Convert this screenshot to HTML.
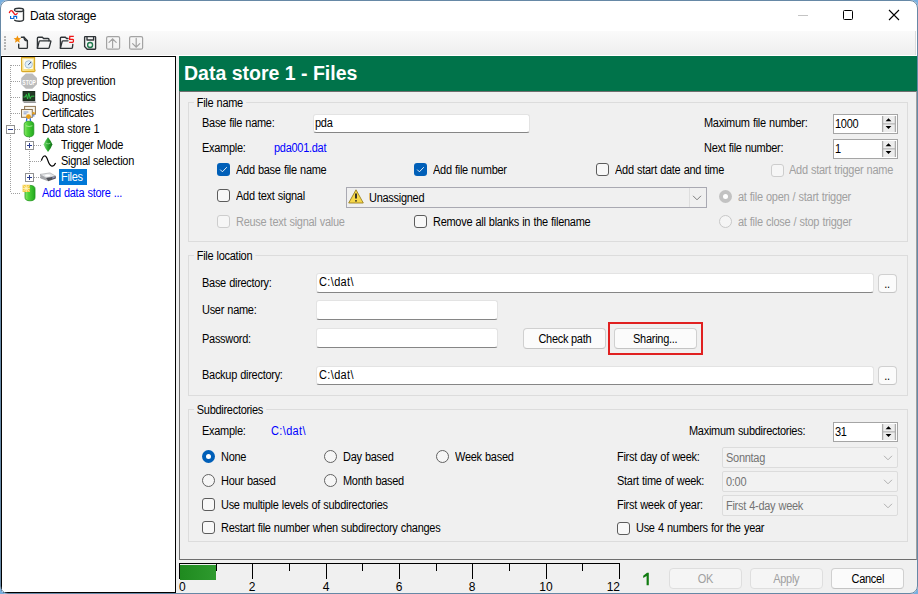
<!DOCTYPE html><html><head><meta charset="utf-8"><style>
*{margin:0;padding:0;box-sizing:border-box}
html,body{width:918px;height:594px;overflow:hidden;background:#77afe0;font-family:"Liberation Sans",sans-serif;}
.a{position:absolute}
.t{position:absolute;font-size:12px;line-height:14px;letter-spacing:-0.3px;word-spacing:0.5px;white-space:nowrap;color:#000;transform:scaleX(0.915);transform-origin:0 0;-webkit-text-stroke-width:0px}
#win{position:absolute;left:0px;top:0px;width:918px;height:594px;border-radius:8px;background:#f0f0f0;overflow:hidden}
#wb{position:absolute;left:0px;top:0px;width:918px;height:594px;border-radius:8px;border:1px solid #6688a6}
.cb{width:13px;height:13px;border:1px solid #5c5c5c;border-radius:3px;background:#f8f8f8}
.cbd{width:13px;height:13px;border:1px solid #cdcdcd;border-radius:3px;background:#f6f6f6}
.cbc{width:13px;height:13px;border-radius:3px;background:#005fb8}
.cbc svg{position:absolute;left:0;top:0}
.r{width:13px;height:13px;border:1px solid #626262;border-radius:50%;background:#f6f6f6}
.rd{width:13px;height:13px;border:1px solid #c8c8c8;border-radius:50%;background:#f5f5f5}
.rc{width:13px;height:13px;border-radius:50%;background:#005fb8}
.rc::after{content:"";position:absolute;left:4px;top:4px;width:5px;height:5px;border-radius:50%;background:#fff}
.tb{background:#fff;border:1px solid #e3e3e3;border-bottom:1px solid #868686;border-radius:3px}
.grp{border:1px solid #dcdcdc}
.sp{width:65px;height:20px;border:1px solid #a5a5a5;background:#fff;box-shadow:inset 1px 1px 0 #fff}
.spb{position:absolute;right:1px;top:1px;width:15px;height:16px;background:#e9e9e9;border:1px solid #b0b0b0}
.up{position:absolute;left:3px;top:2px;width:0;height:0;border-left:4px solid transparent;border-right:4px solid transparent;border-bottom:4px solid #000}
.dn{position:absolute;left:3px;top:9px;width:0;height:0;border-left:4px solid transparent;border-right:4px solid transparent;border-top:4px solid #000}
.btn{background:#fbfbfb;border:1px solid #d0d0d0;border-bottom-color:#c4c4c4;border-radius:4px;text-align:center;font-size:12px;letter-spacing:-0.3px;color:#000;white-space:nowrap;-webkit-text-stroke-width:0px}
.btn span{display:inline-block;transform:scaleX(0.915)}
.btn.dis{background:#f5f5f5;border-color:#dedede;color:#a0a0a0}
.cmb{background:#f0f0f0;border:1px solid #a9a9b2}
.cmb.dis{background:#f2f2f2;border:1px solid #dcdcdc;border-radius:2px}
</style></head><body><div id="win">
<div class="a" style="left:1px;top:1px;width:916px;height:29px;background:#fff;border-radius:7px 7px 0 0"></div>
<div class="a" style="left:1px;top:30px;width:916px;height:26px;background:#fff"></div>
<div class="a" style="left:1px;top:31px;width:915px;height:24px;background:linear-gradient(#fafafa,#eeeeee);border-right:1px solid #dcdcdc"></div>
<div class="a" style="left:30px;top:9px;font-size:12px;letter-spacing:-0.2px;line-height:15px;white-space:nowrap">Data storage</div>
<svg class="a" style="left:0px;top:0px" width="30" height="28" viewBox="0 0 30 28">
<ellipse cx="19" cy="9.9" rx="4.5" ry="1.6" stroke="#2f3437" stroke-width="1.4" fill="none"/>
<path d="M23.5 9.9 L23.5 19.6 Q23.5 21.3 19.2 21.3 Q15.4 21.3 14.6 20.2" stroke="#2f3437" stroke-width="1.4" fill="none" stroke-linecap="round"/>
<path d="M9.4 12.6 Q10.6 9.6 12.2 11 Q13.4 12.4 14.4 14 Q15.6 15.4 17.2 13.4" stroke="#f01c1c" stroke-width="1.3" fill="none" stroke-linecap="round"/>
<path d="M10.6 16.1 L10.6 18.5 L13.8 18.5 L13.8 16.3 L16.6 16.3 L16.6 18.7" stroke="#0a68d8" stroke-width="1.2" fill="none"/>
</svg>
<div class="a" style="left:798px;top:15px;width:10px;height:1px;background:#c4c4c4"></div>
<div class="a" style="left:843px;top:10px;width:10px;height:10px;border:1px solid #000;border-radius:1.5px"></div>
<svg class="a" style="left:888px;top:9px" width="12" height="12" viewBox="0 0 12 12"><path d="M1 1 L11 11 M11 1 L1 11" stroke="#000" stroke-width="1.1"/></svg>
<div class="a" style="left:4px;top:36px;width:2px;height:2px;background:#b4b4b4"></div>
<div class="a" style="left:4px;top:39px;width:2px;height:2px;background:#b4b4b4"></div>
<div class="a" style="left:4px;top:42px;width:2px;height:2px;background:#b4b4b4"></div>
<div class="a" style="left:4px;top:45px;width:2px;height:2px;background:#b4b4b4"></div>
<div class="a" style="left:4px;top:48px;width:2px;height:2px;background:#b4b4b4"></div>

<svg class="a" style="left:0px;top:30px" width="150" height="26" viewBox="0 30 150 26">
 <g fill="none" stroke="#2f3437" stroke-width="1.35" stroke-linejoin="round" stroke-linecap="round">
  <path d="M18.7 44.2 L18.7 47.4 Q18.7 48.4 19.7 48.4 L26.4 48.4 Q27.4 48.4 27.4 47.4 L27.4 40.8 L24 37.2 L21.4 37.2"/>
  <path d="M24 37.2 Q24 40.8 27.4 40.8"/>
  <path d="M37.4 48.2 L37.4 38.2 Q37.4 37.2 38.4 37.2 L42.4 37.2 L43.6 38.5 L48 38.5 Q49 38.5 49 39.5 L49 40.8"/>
  <path d="M37.4 48.2 L39.2 41.4 Q39.4 40.8 40.2 40.8 L50.2 40.8 Q51 40.8 50.8 41.6 L49.2 47.6 Q49 48.4 48.2 48.4 L37.6 48.4"/>
  <path d="M60.4 48.2 L60.4 38.2 Q60.4 37.2 61.4 37.2 L65.4 37.2 L66.6 38.5 L68 38.5"/>
  <path d="M60.4 48.2 L62.2 41.4 Q62.4 40.8 63.2 40.8 L68 40.8"/>
  <path d="M60.6 48.4 L71.4 48.4 Q72.2 48.4 72.4 47.6 L72.8 44.4"/>
  <path d="M85 36.6 L95 36.6 Q95.6 36.6 95.6 37.2 L95.6 48.6 Q95.6 49.2 95 49.2 L87.2 49.2 L84.6 46.6 L84.6 37.2 Q84.6 36.6 85.2 36.6 Z"/>
  <path d="M87 36.8 L87 40 L93.6 40 L93.6 36.8"/>
 </g>
 <path d="M17.4 35.6 L18.5 38.1 L21.2 38.3 L19.2 40.1 L19.8 42.7 L17.4 41.3 L15 42.7 L15.6 40.1 L13.6 38.3 L16.3 38.1 Z" fill="#f0940e"/>
 <path d="M73.8 36.4 L69.8 36.4 L69.6 39.3 L72.6 39.3 Q73.4 39.3 73.4 40.1 L73.4 41.6 Q73.4 42.4 72.6 42.4 L69.2 42.4" fill="none" stroke="#f01515" stroke-width="1.3"/>
 <circle cx="90.1" cy="45" r="2.5" fill="none" stroke="#1f7a4d" stroke-width="1.35"/>
 <g fill="none" stroke="#a3a3a3" stroke-width="1.2" stroke-linecap="round">
  <rect x="106.6" y="36.6" width="13" height="12.6" rx="1.5"/>
  <path d="M112.6 38.8 L112.6 47.6 M109 42.4 L112.6 38.8 L116.2 42.4"/>
  <rect x="129.6" y="36.6" width="13" height="12.6" rx="1.5"/>
  <path d="M136.2 38.4 L136.2 47.2 M132.6 43.6 L136.2 47.2 L139.8 43.6"/>
 </g>
</svg>

<div class="a" style="left:1px;top:56px;width:175px;height:537px;background:#fff;border:1px solid #000;border-right-width:1px"></div>
<div class="a" style="left:10px;top:65px;width:1px;height:128px;background:repeating-linear-gradient(180deg,#a0a0a0 0 1px,transparent 1px 2px)"></div>
<div class="a" style="left:11px;top:65px;width:10px;height:1px;background:repeating-linear-gradient(90deg,#a0a0a0 0 1px,transparent 1px 2px)"></div>
<div class="a" style="left:11px;top:81px;width:10px;height:1px;background:repeating-linear-gradient(90deg,#a0a0a0 0 1px,transparent 1px 2px)"></div>
<div class="a" style="left:11px;top:97px;width:10px;height:1px;background:repeating-linear-gradient(90deg,#a0a0a0 0 1px,transparent 1px 2px)"></div>
<div class="a" style="left:11px;top:113px;width:10px;height:1px;background:repeating-linear-gradient(90deg,#a0a0a0 0 1px,transparent 1px 2px)"></div>
<div class="a" style="left:11px;top:129px;width:10px;height:1px;background:repeating-linear-gradient(90deg,#a0a0a0 0 1px,transparent 1px 2px)"></div>
<div class="a" style="left:11px;top:193px;width:10px;height:1px;background:repeating-linear-gradient(90deg,#a0a0a0 0 1px,transparent 1px 2px)"></div>
<div class="a" style="left:29px;top:137px;width:1px;height:40px;background:repeating-linear-gradient(180deg,#a0a0a0 0 1px,transparent 1px 2px)"></div>
<div class="a" style="left:30px;top:145px;width:11px;height:1px;background:repeating-linear-gradient(90deg,#a0a0a0 0 1px,transparent 1px 2px)"></div>
<div class="a" style="left:30px;top:161px;width:11px;height:1px;background:repeating-linear-gradient(90deg,#a0a0a0 0 1px,transparent 1px 2px)"></div>
<div class="a" style="left:30px;top:177px;width:11px;height:1px;background:repeating-linear-gradient(90deg,#a0a0a0 0 1px,transparent 1px 2px)"></div>
<div class="a" style="left:6px;top:125px;width:9px;height:9px;border:1px solid #919191;background:#fff"><div class="a" style="left:1px;top:3px;width:5px;height:1px;background:#2b3d8f"></div></div>
<div class="a" style="left:25px;top:141px;width:9px;height:9px;border:1px solid #919191;background:#fff"><div class="a" style="left:1px;top:3px;width:5px;height:1px;background:#2b3d8f"></div><div class="a" style="left:3px;top:1px;width:1px;height:5px;background:#2b3d8f"></div></div>
<div class="a" style="left:25px;top:173px;width:9px;height:9px;border:1px solid #919191;background:#fff"><div class="a" style="left:1px;top:3px;width:5px;height:1px;background:#2b3d8f"></div><div class="a" style="left:3px;top:1px;width:1px;height:5px;background:#2b3d8f"></div></div>
<div class="a" style="left:59px;top:169px;width:28px;height:16px;background:#0078d7"></div>
<div class="t" style="left:42px;top:58px;">Profiles</div>
<div class="t" style="left:42px;top:74px;">Stop prevention</div>
<div class="t" style="left:42px;top:90px;">Diagnostics</div>
<div class="t" style="left:42px;top:106px;">Certificates</div>
<div class="t" style="left:42px;top:122px;">Data store 1</div>
<div class="t" style="left:61px;top:138px;">Trigger Mode</div>
<div class="t" style="left:61px;top:154px;">Signal selection</div>
<div class="t" style="left:61px;top:170px;color:#fff;">Files</div>
<div class="t" style="left:42px;top:186px;color:#0000ff;">Add data store ...</div>

<svg class="a" style="left:0px;top:56px" width="176" height="150" viewBox="0 56 176 150">
 <defs>
  <linearGradient id="cyl" x1="0" x2="1" y1="0" y2="0"><stop offset="0" stop-color="#8ee86a"/><stop offset="0.35" stop-color="#4fd33a"/><stop offset="1" stop-color="#22a81e"/></linearGradient>
  <linearGradient id="gem" x1="0" x2="1"><stop offset="0" stop-color="#7be07a"/><stop offset="0.5" stop-color="#28a32a"/><stop offset="1" stop-color="#0e6e14"/></linearGradient>
  <linearGradient id="prof" x1="0" x2="1" y1="0" y2="1"><stop offset="0" stop-color="#fff6c8"/><stop offset="1" stop-color="#f2d35a"/></linearGradient>
 </defs>
 <!-- Profiles -->
 <path d="M21.6 57.6 L34.6 57.6 L34.6 69.5 Q35.8 70.6 34.2 71.6 L22.6 71.6 Q21.6 71.6 21.6 70.6 Z" fill="url(#prof)" stroke="#d9a824" stroke-width="1.1"/>
 <rect x="23.6" y="59.4" width="9.2" height="9.6" fill="#fffdf0"/>
 <circle cx="28.7" cy="64.4" r="3.7" fill="#dff0fb" stroke="#9bb6cc" stroke-width="0.8"/>
 <path d="M28.3 64.8 L31 62.2" stroke="#2a3d66" stroke-width="1"/>
 <!-- STOP -->
 <path d="M25.8 73.4 L32.4 73.4 L37 78 L37 84.2 L32.4 88.8 L25.8 88.8 L21.2 84.2 L21.2 78 Z" fill="#bcbcbc"/>
 <text x="29.1" y="84.6" text-anchor="middle" font-family="Liberation Sans" font-size="8" font-weight="bold" fill="#fff" textLength="13.6" lengthAdjust="spacingAndGlyphs">STOP</text>
 <!-- Diagnostics -->
 <rect x="22.6" y="91" width="12.6" height="10.2" fill="#1b2a1d"/>
 <rect x="23.4" y="91.8" width="11" height="8.6" fill="#233a26"/>
 <path d="M23.4 97 L25.4 97 L26.4 94.4 L27.6 99 L28.8 93.2 L30.2 98.6 L31.4 96.2 L34.4 96.2" stroke="#31d24a" stroke-width="0.9" fill="none"/>
 <path d="M22.6 101.2 L35.2 101.2 L36.4 103 L24 103 Z" fill="#9a9a9a"/>
 <!-- Certificates -->
 <rect x="24.6" y="106.4" width="10.8" height="7.8" fill="#f6f2e8" stroke="#8c7452" stroke-width="1"/>
 <rect x="21.5" y="109.5" width="10.8" height="7.8" fill="#f6f2e8" stroke="#8c7452" stroke-width="1"/>
 <path d="M23.6 112 L28.4 112 M23.6 113.8 L26.6 113.8" stroke="#6a86cc" stroke-width="0.8"/>
 <path d="M27 118 L26.4 121 M30 118 L30.6 121" stroke="#2f6ee0" stroke-width="1.3"/>
 <circle cx="28.5" cy="116.6" r="2.4" fill="#e9a11a"/>
 <path d="M33.8 114.2 L33.8 116.6" stroke="#2f6ee0" stroke-width="1"/>
 <circle cx="33.6" cy="113.2" r="1.2" fill="#e9a11a"/>
 <!-- Data store cylinder -->
 <path d="M24.2 124.6 Q24.2 121.2 29 121.2 Q33.8 121.2 33.8 124.6 L33.8 133.2 Q33.8 136.8 29 136.8 Q24.2 136.8 24.2 133.2 Z" fill="url(#cyl)" stroke="#22961e" stroke-width="0.8"/>
 <path d="M25.8 125.8 Q29 127.2 32.4 125.8" stroke="#c8f5b8" stroke-width="0.7" fill="none"/>
 <!-- Trigger gem -->
 <path d="M48 137.2 Q51.4 141.4 52.4 144.4 Q51.4 147.6 48 152 Q44.6 147.6 43.6 144.4 Q44.6 141.4 48 137.2 Z" fill="url(#gem)"/>
 <path d="M46 143.2 Q48 144.6 50.4 143.2" stroke="#b8f2b0" stroke-width="0.6" fill="none"/>
 <!-- Signal wave -->
 <path d="M41.4 160.6 C43.4 154.6, 45.8 154.4, 47.8 160.4 S53 168.4, 55.6 163" stroke="#000" stroke-width="1.25" fill="none"/>
 <!-- Files disk -->
 <path d="M40 174.4 L50 172.9 L55.8 176.2 L46 178 Z" fill="#e4e6e8" stroke="#9a9ca0" stroke-width="0.6"/>
 <path d="M40 174.4 L46 178 L48.2 181.3 L40.6 178.6 Z" fill="#a4a6aa"/>
 <path d="M46 178 L55.8 176.2 L55.8 178.6 L48.2 181.3 Z" fill="#505258"/>
 <ellipse cx="47.6" cy="175.4" rx="2.6" ry="1" fill="#fff"/>
 <path d="M52.2 178 L54.6 177.4" stroke="#9aa0d8" stroke-width="1"/>
 <!-- Add data store -->
 <path d="M25 188.8 Q25 185.4 30 185.4 Q35 185.4 35 188.8 L35 197.4 Q35 200.8 30 200.8 Q25 200.8 25 197.4 Z" fill="url(#cyl)" stroke="#22961e" stroke-width="0.8"/>
 <rect x="22.6" y="184.8" width="7.2" height="7.2" fill="#f4c93c"/>
 <path d="M22.6 188.4 L29.8 188.4 M26.2 184.8 L26.2 192 M23.2 185.4 L29.2 191.4 M29.2 185.4 L23.2 191.4" stroke="#fff6c0" stroke-width="0.9"/>
</svg>

<div class="a" style="left:179px;top:56px;width:738px;height:35px;background:#00734a"></div>
<div class="a" style="left:184px;top:62px;font-size:19.5px;font-weight:bold;color:#fff;line-height:22px;letter-spacing:0px;white-space:nowrap">Data store 1 - Files</div>
<div class="a" style="left:179px;top:91px;width:738px;height:469px;border-left:1px solid #6e6e6e;border-top:1px solid #6e6e6e;border-bottom:1px solid #6e6e6e;border-right:1px solid #a0a0a0;background:#f0f0f0;width:738px"></div>
<div class="a grp" style="left:188px;top:102px;width:720px;height:140px;"></div>
<div class="t" style="left:194px;top:96px;background:#f0f0f0;padding:0 3px;">File name</div>
<div class="t" style="left:202px;top:116px;">Base file name:</div>
<div class="a tb" style="left:313px;top:114px;width:217px;height:19px;"></div>
<div class="t" style="left:315px;top:116px;">pda</div>
<div class="t" style="left:202px;top:141px;">Example:</div>
<div class="t" style="left:274px;top:141px;color:#0000ff;">pda001.dat</div>
<div class="t" style="left:704px;top:116px;">Maximum file number:</div>
<div class="a sp" style="left:833px;top:114px;"></div>
<svg class="a" style="left:833px;top:114px" width="65" height="20" viewBox="0 0 65 20">
<rect x="49" y="2" width="14" height="16" fill="#ededed"/>
<rect x="49" y="9" width="14" height="1.6" fill="#c2c2c2"/>
<path d="M49.6 2 L49.6 18 M62.4 2 L62.4 18" stroke="#ababab" stroke-width="1.3"/>
<path d="M52.6 7.2 L58.4 7.2 L55.5 4.2 Z M52.6 12 L58.4 12 L55.5 15 Z" fill="#000"/>
</svg>
<div class="t" style="left:835px;top:117px;">1000</div>
<div class="t" style="left:704px;top:141px;">Next file number:</div>
<div class="a sp" style="left:833px;top:139px;"></div>
<svg class="a" style="left:833px;top:139px" width="65" height="20" viewBox="0 0 65 20">
<rect x="49" y="2" width="14" height="16" fill="#ededed"/>
<rect x="49" y="9" width="14" height="1.6" fill="#c2c2c2"/>
<path d="M49.6 2 L49.6 18 M62.4 2 L62.4 18" stroke="#ababab" stroke-width="1.3"/>
<path d="M52.6 7.2 L58.4 7.2 L55.5 4.2 Z M52.6 12 L58.4 12 L55.5 15 Z" fill="#000"/>
</svg>
<div class="t" style="left:835px;top:142px;">1</div>
<div class="a cbc" style="left:217px;top:163px;"><svg width="13" height="13" viewBox="0 0 13 13"><path d="M3.2 6.6 L5.4 8.8 L9.8 4.2" stroke="#fff" stroke-width="0.9" fill="none"/></svg></div>
<div class="t" style="left:236px;top:163px;">Add base file name</div>
<div class="a cbc" style="left:414px;top:163px;"><svg width="13" height="13" viewBox="0 0 13 13"><path d="M3.2 6.6 L5.4 8.8 L9.8 4.2" stroke="#fff" stroke-width="0.9" fill="none"/></svg></div>
<div class="t" style="left:433px;top:163px;">Add file number</div>
<div class="a cb" style="left:596px;top:163px;"></div>
<div class="t" style="left:615px;top:163px;">Add start date and time</div>
<div class="a cbd" style="left:771px;top:164px;"></div>
<div class="t" style="left:789px;top:163px;color:#a0a0a0;">Add start trigger name</div>
<div class="a cb" style="left:217px;top:189px;"></div>
<div class="t" style="left:236px;top:189px;">Add text signal</div>
<div class="a cmb" style="left:346px;top:187px;width:361px;height:21px;"></div>
<div class="a" style="left:689px;top:188px;width:1px;height:19px;background:#dedede"></div>
<svg class="a" style="left:692px;top:195px" width="10" height="6" viewBox="0 0 10 6"><path d="M1 0.8 L5 4.8 L9 0.8" stroke="#707070" stroke-width="0.9" fill="none"/></svg>
<div class="t" style="left:369px;top:191px;">Unassigned</div>
<svg class="a" style="left:348px;top:189px" width="16" height="15" viewBox="0 0 16 15">
<path d="M8 0.8 L15.3 14 L0.7 14 Z" fill="#f7d84a" stroke="#9a8020" stroke-width="0.9" stroke-linejoin="round"/>
<path d="M8 4.5 L8 9.5" stroke="#222" stroke-width="1.8"/><circle cx="8" cy="11.8" r="0.9" fill="#222"/>
</svg>
<div class="a" style="left:719px;top:190px;width:13px;height:13px;border-radius:50%;background:#c2c2c2"></div>
<div class="a" style="left:723px;top:194px;width:5px;height:5px;border-radius:50%;background:#fff"></div>
<div class="t" style="left:738px;top:190px;color:#a0a0a0;">at file open / start trigger</div>
<div class="a cbd" style="left:217px;top:215px;"></div>
<div class="t" style="left:236px;top:215px;color:#a0a0a0;">Reuse text signal value</div>
<div class="a cb" style="left:414px;top:215px;"></div>
<div class="t" style="left:433px;top:215px;">Remove all blanks in the filename</div>
<div class="a rd" style="left:719px;top:215px;"></div>
<div class="t" style="left:738px;top:215px;color:#a0a0a0;">at file close / stop trigger</div>
<div class="a grp" style="left:188px;top:255px;width:720px;height:141px;"></div>
<div class="t" style="left:194px;top:249px;background:#f0f0f0;padding:0 3px;">File location</div>
<div class="t" style="left:202px;top:276px;">Base directory:</div>
<div class="a tb" style="left:316px;top:273px;width:558px;height:20px;"></div>
<div class="t" style="left:319px;top:275px;letter-spacing:0.4px;">C:\dat\</div>
<div class="a btn" style="left:878px;top:274px;width:19px;height:19px;line-height:18px;"><span>..</span></div>
<div class="t" style="left:202px;top:303px;">User name:</div>
<div class="a tb" style="left:316px;top:300px;width:182px;height:20px;"></div>
<div class="t" style="left:202px;top:332px;">Password:</div>
<div class="a tb" style="left:316px;top:328px;width:182px;height:20px;"></div>
<div class="a btn" style="left:523px;top:328px;width:83px;height:21px;line-height:20px;"><span>Check path</span></div>
<div class="a btn" style="left:614px;top:328px;width:83px;height:21px;line-height:20px;"><span>Sharing...</span></div>
<div class="a" style="left:608px;top:322px;width:95px;height:33px;border:2px solid #e02020"></div>
<div class="t" style="left:202px;top:368px;">Backup directory:</div>
<div class="a tb" style="left:316px;top:366px;width:558px;height:19px;"></div>
<div class="t" style="left:319px;top:368px;letter-spacing:0.4px;">C:\dat\</div>
<div class="a btn" style="left:878px;top:366px;width:19px;height:19px;line-height:18px;"><span>..</span></div>
<div class="a grp" style="left:188px;top:409px;width:720px;height:133px;"></div>
<div class="t" style="left:194px;top:403px;background:#f0f0f0;padding:0 3px;">Subdirectories</div>
<div class="t" style="left:202px;top:424px;">Example:</div>
<div class="t" style="left:271px;top:424px;color:#0000ff;letter-spacing:0.4px;">C:\dat\</div>
<div class="a rc" style="left:202px;top:450px;"></div>
<div class="t" style="left:221px;top:450px;">None</div>
<div class="a r" style="left:324px;top:450px;"></div>
<div class="t" style="left:343px;top:450px;">Day based</div>
<div class="a r" style="left:436px;top:450px;"></div>
<div class="t" style="left:455px;top:450px;">Week based</div>
<div class="a r" style="left:202px;top:474px;"></div>
<div class="t" style="left:221px;top:474px;">Hour based</div>
<div class="a r" style="left:324px;top:474px;"></div>
<div class="t" style="left:343px;top:474px;">Month based</div>
<div class="a cb" style="left:202px;top:498px;"></div>
<div class="t" style="left:221px;top:498px;">Use multiple levels of subdirectories</div>
<div class="a cb" style="left:202px;top:521px;"></div>
<div class="t" style="left:221px;top:521px;">Restart file number when subdirectory changes</div>
<div class="t" style="left:689px;top:424px;">Maximum subdirectories:</div>
<div class="a sp" style="left:833px;top:422px;"></div>
<svg class="a" style="left:833px;top:422px" width="65" height="20" viewBox="0 0 65 20">
<rect x="49" y="2" width="14" height="16" fill="#ededed"/>
<rect x="49" y="9" width="14" height="1.6" fill="#c2c2c2"/>
<path d="M49.6 2 L49.6 18 M62.4 2 L62.4 18" stroke="#ababab" stroke-width="1.3"/>
<path d="M52.6 7.2 L58.4 7.2 L55.5 4.2 Z M52.6 12 L58.4 12 L55.5 15 Z" fill="#000"/>
</svg>
<div class="t" style="left:835px;top:425px;">31</div>
<div class="t" style="left:617px;top:450px;">First day of week:</div>
<div class="a cmb dis" style="left:722px;top:447px;width:176px;height:21px;"></div>
<svg class="a" style="left:883px;top:455px" width="10" height="6" viewBox="0 0 10 6"><path d="M1 0.8 L5 4.8 L9 0.8" stroke="#a8a8a8" stroke-width="0.9" fill="none"/></svg>
<div class="t" style="left:726px;top:451px;color:#747474;">Sonntag</div>
<div class="t" style="left:617px;top:474px;">Start time of week:</div>
<div class="a cmb dis" style="left:722px;top:471px;width:176px;height:21px;"></div>
<svg class="a" style="left:883px;top:479px" width="10" height="6" viewBox="0 0 10 6"><path d="M1 0.8 L5 4.8 L9 0.8" stroke="#a8a8a8" stroke-width="0.9" fill="none"/></svg>
<div class="t" style="left:726px;top:475px;color:#747474;">0:00</div>
<div class="t" style="left:617px;top:498px;">First week of year:</div>
<div class="a cmb dis" style="left:722px;top:495px;width:176px;height:21px;"></div>
<svg class="a" style="left:883px;top:503px" width="10" height="6" viewBox="0 0 10 6"><path d="M1 0.8 L5 4.8 L9 0.8" stroke="#a8a8a8" stroke-width="0.9" fill="none"/></svg>
<div class="t" style="left:726px;top:499px;color:#747474;">First 4-day week</div>
<div class="a cb" style="left:617px;top:522px;"></div>
<div class="t" style="left:636px;top:521px;">Use 4 numbers for the year</div>
<div class="a" style="left:179px;top:563px;width:441px;height:1px;background:#000"></div>
<div class="a" style="left:180px;top:565px;width:36px;height:15px;background:linear-gradient(90deg,#1f8a1f,#2e9a2e)"></div>
<div class="a" style="left:179px;top:563px;width:1px;height:16px;background:#000"></div>
<div class="a" style="left:179px;top:580px;font-size:12px;line-height:14px;white-space:nowrap">0</div>
<div class="a" style="left:216px;top:563px;width:1px;height:8px;background:#000"></div>
<div class="a" style="left:252px;top:563px;width:1px;height:16px;background:#000"></div>
<div class="a" style="left:232px;top:580px;width:40px;text-align:center;font-size:12px;line-height:14px;white-space:nowrap">2</div>
<div class="a" style="left:289px;top:563px;width:1px;height:8px;background:#000"></div>
<div class="a" style="left:326px;top:563px;width:1px;height:16px;background:#000"></div>
<div class="a" style="left:306px;top:580px;width:40px;text-align:center;font-size:12px;line-height:14px;white-space:nowrap">4</div>
<div class="a" style="left:362px;top:563px;width:1px;height:8px;background:#000"></div>
<div class="a" style="left:399px;top:563px;width:1px;height:16px;background:#000"></div>
<div class="a" style="left:379px;top:580px;width:40px;text-align:center;font-size:12px;line-height:14px;white-space:nowrap">6</div>
<div class="a" style="left:436px;top:563px;width:1px;height:8px;background:#000"></div>
<div class="a" style="left:472px;top:563px;width:1px;height:16px;background:#000"></div>
<div class="a" style="left:452px;top:580px;width:40px;text-align:center;font-size:12px;line-height:14px;white-space:nowrap">8</div>
<div class="a" style="left:509px;top:563px;width:1px;height:8px;background:#000"></div>
<div class="a" style="left:546px;top:563px;width:1px;height:16px;background:#000"></div>
<div class="a" style="left:526px;top:580px;width:40px;text-align:center;font-size:12px;line-height:14px;white-space:nowrap">10</div>
<div class="a" style="left:582px;top:563px;width:1px;height:8px;background:#000"></div>
<div class="a" style="left:619px;top:563px;width:1px;height:16px;background:#000"></div>
<div class="a" style="left:579px;top:580px;width:41px;text-align:right;font-size:12px;line-height:14px;white-space:nowrap">12</div>
<svg class="a" style="left:640px;top:570px" width="12" height="18" viewBox="640 570 12 18"><path d="M643.2 575.8 L647 572.8 L648.8 572.8 L648.8 585.2 L646.6 585.2 L646.6 575.9 L643.2 577.9 Z" fill="#117c11"/></svg>
<div class="a btn dis" style="left:669px;top:568px;width:73px;height:21px;line-height:20px;"><span>OK</span></div>
<div class="a btn dis" style="left:750px;top:568px;width:73px;height:21px;line-height:20px;"><span>Apply</span></div>
<div class="a btn" style="left:831px;top:568px;width:73px;height:21px;line-height:20px;"><span>Cancel</span></div>
</div><div id="wb"></div></body></html>
